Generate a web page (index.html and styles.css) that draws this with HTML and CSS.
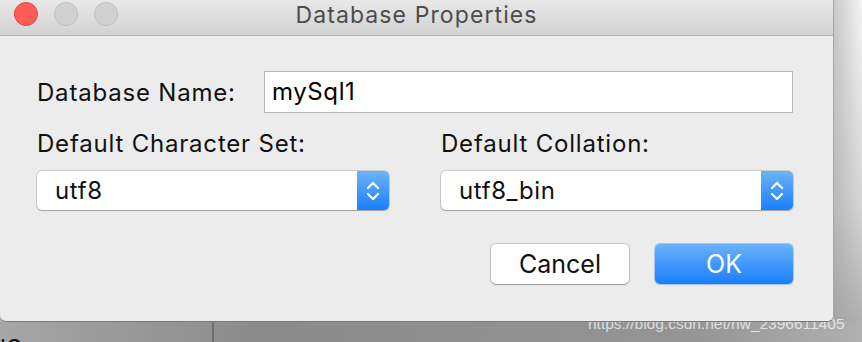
FILE: index.html
```html
<!DOCTYPE html>
<html>
<head>
<meta charset="utf-8">
<link rel="stylesheet" href="styles.css">
</head>
<body>
<div class="desktop">
  <div class="top">
    <div class="window">
      <div class="titlebar">
        <div class="lights">
          <span class="light close"></span>
          <span class="light"></span>
          <span class="light"></span>
        </div>
        <div class="title">Database Properties</div>
      </div>
      <div class="content">
        <div class="name-row">
          <label class="label name-label">Database Name:</label>
          <div class="textfield">mySql1</div>
        </div>
        <div class="pickers">
          <div class="picker">
            <div class="label">Default Character Set:</div>
            <div class="select">
              <span class="select-value">utf8</span>
              <span class="stepper">
                <svg width="14" height="22" viewBox="0 0 14 22"><path d="M2 8 L7 3 L12 8 M2 14 L7 19 L12 14" fill="none" stroke="#fff" stroke-width="2.2" stroke-linecap="round" stroke-linejoin="round"/></svg>
              </span>
            </div>
          </div>
          <div class="picker">
            <div class="label">Default Collation:</div>
            <div class="select">
              <span class="select-value">utf8_bin</span>
              <span class="stepper">
                <svg width="14" height="22" viewBox="0 0 14 22"><path d="M2 8 L7 3 L12 8 M2 14 L7 19 L12 14" fill="none" stroke="#fff" stroke-width="2.2" stroke-linecap="round" stroke-linejoin="round"/></svg>
              </span>
            </div>
          </div>
        </div>
        <div class="buttons">
          <button class="btn cancel">Cancel</button>
          <button class="btn ok">OK</button>
        </div>
      </div>
    </div>
    <div class="side"></div>
  </div>
  <div class="bottom">
    <div class="pane left"><span class="peek">IO</span></div>
    <div class="pane right"></div>
  </div>
  <div class="watermark">https://blog.csdn.net/hw_2396611405</div>
</div>
</body>
</html>
```
FILE: styles.css
```css
* { box-sizing: border-box; }
html, body { margin: 0; padding: 0; }
body {
  width: 862px;
  height: 342px;
  overflow: hidden;
  font-family: "Inter", "Liberation Sans", sans-serif;
}
.desktop {
  position: relative;
  width: 862px;
  height: 342px;
  display: flex;
  flex-direction: column;
  background: linear-gradient(180deg, #f4f4f4 0%, #d6d6d6 60%, #a9a9a9 100%);
}
.top {
  display: flex;
  height: 322px;
}
.window {
  width: 834px;
  height: 322px;
  background: #ececec;
  border-right: 1px solid #a8a8a8;
  border-bottom: 1px solid #7a7a7a;
  border-radius: 0 0 6px 6px;
  display: flex;
  flex-direction: column;
  position: relative;
  z-index: 1;
}
.side {
  flex: 1;
  background: linear-gradient(90deg, rgba(150,150,150,0.45), rgba(255,255,255,0) 100%);
}
.titlebar {
  height: 36px;
  background: linear-gradient(180deg, #e8e8e8, #d2d2d2);
  border-bottom: 1px solid #afafaf;
  display: flex;
  align-items: center;
  position: relative;
}
.lights {
  display: flex;
  gap: 16px;
  padding-left: 14px;
  margin-top: -8px;
}
.light {
  width: 24px;
  height: 24px;
  border-radius: 50%;
  background: #d1d1d1;
  border: 1px solid #bdbdbd;
}
.light.close {
  background: #fd5c57;
  border-color: #e2463f;
}
.title {
  position: absolute;
  left: 0;
  right: 0;
  top: 0;
  text-align: center;
  font-size: 23px;
  letter-spacing: 1.1px;
  line-height: 30px;
  color: #4c4c4c;
  padding-left: 0;
}
.content {
  padding: 35px 40px 0 37px;
  display: flex;
  flex-direction: column;
}
.label {
  font-size: 24px;
  letter-spacing: 0.8px;
  line-height: 28px;
  color: #111;
}
.name-row {
  display: flex;
  align-items: center;
  height: 42px;
}
.name-label {
  width: 227px;
  flex: none;
  padding-top: 2px;
}
.textfield {
  flex: 1;
  height: 42px;
  background: #fff;
  border: 1px solid #b7b7b7;
  font-size: 24px;
  letter-spacing: 0.6px;
  line-height: 40px;
  padding-left: 7px;
  color: #000;
}
.pickers {
  display: grid;
  grid-template-columns: 352px 352px;
  column-gap: 52px;
  margin-top: 17px;
}
.picker .label {
  margin-bottom: 13px;
}
.select {
  height: 39px;
  background: #fff;
  border-radius: 5px;
  box-shadow: 0 0 0 1px rgba(0,0,0,0.14), 0 1px 1px rgba(0,0,0,0.2);
  display: flex;
  overflow: hidden;
}
.select-value {
  flex: 1;
  font-size: 24px;
  letter-spacing: 0.6px;
  line-height: 39px;
  padding-left: 18px;
  color: #111;
}
.stepper {
  width: 32px;
  background: linear-gradient(180deg, #6cb3fa, #1b7ffa);
  display: flex;
  align-items: center;
  justify-content: center;
}
.buttons {
  display: flex;
  justify-content: flex-end;
  gap: 26px;
  margin-top: 34px;
}
.btn {
  width: 138px;
  height: 40px;
  border-radius: 5px;
  font-family: inherit;
  font-size: 25px;
  padding: 0;
  border: none;
}
.cancel {
  background: #fff;
  color: #111;
  box-shadow: 0 0 0 1px rgba(0,0,0,0.16), 0 1px 1px rgba(0,0,0,0.2);
}
.ok {
  background: linear-gradient(180deg, #6ab2fb, #1a7ffa);
  color: #fff;
  box-shadow: 0 0 0 1px rgba(20,100,220,0.3);
}
.bottom {
  display: flex;
  height: 20px;
  background: linear-gradient(90deg, #a6a6a6, #8b8b8b 30%, #949494 80%, #b0b0b0);
}
.pane.left {
  width: 214px;
  border-right: 2px solid #6f6f6f;
  overflow: hidden;
  position: relative;
}
.pane.right { flex: 1; }
.peek {
  display: block;
  font-size: 22px;
  line-height: 22px;
  margin-top: 14px;
  margin-left: 0;
  color: #111;
}
.watermark {
  position: absolute;
  left: 588px;
  top: 314px;
  font-family: "Liberation Sans", sans-serif;
  font-size: 15.5px;
  line-height: 20px;
  color: rgba(255,255,255,0.7);
}
```
